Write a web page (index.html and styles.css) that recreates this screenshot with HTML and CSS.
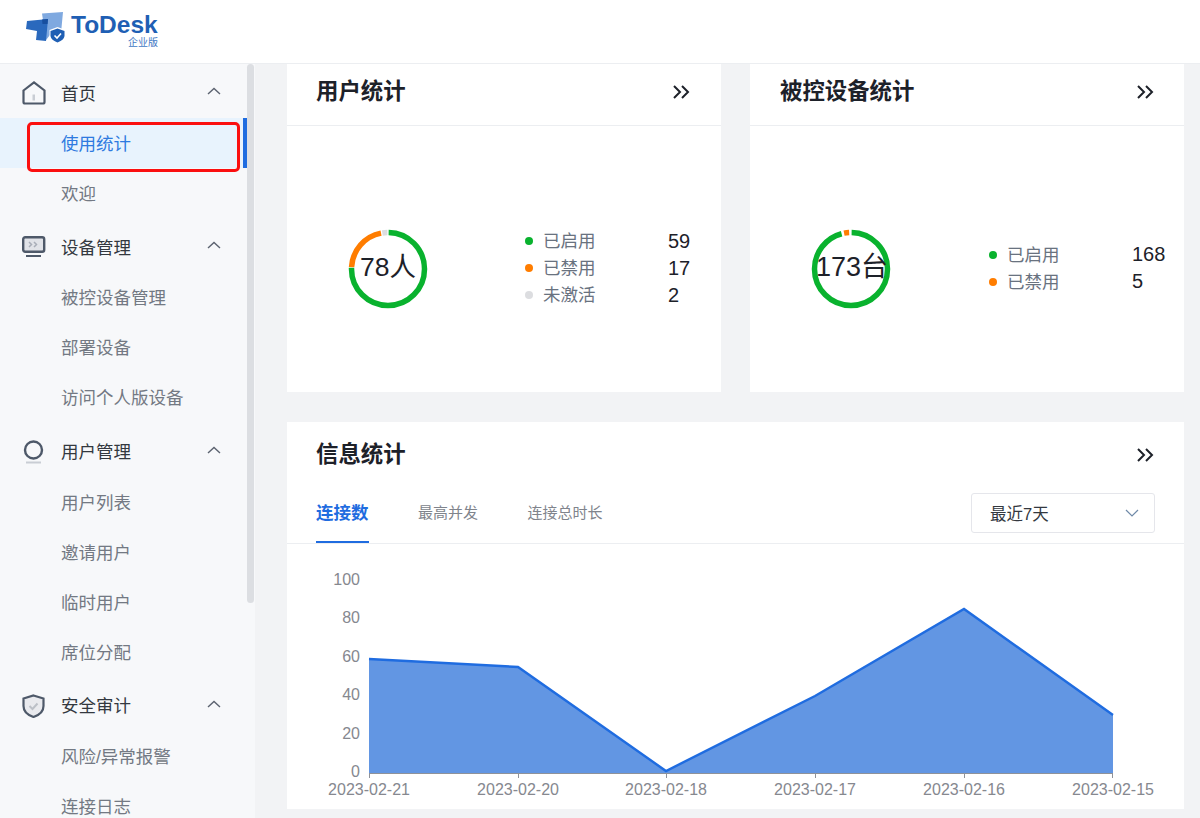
FILE: index.html
```html
<!DOCTYPE html>
<html lang="zh-CN">
<head>
    <meta charset="UTF-8">
    <meta name="viewport" content="width=device-width, initial-scale=1.0">
    <title>ToDesk 企业版</title>
    <link rel="stylesheet" href="styles.css">
</head>
<body>
    <header class="topbar">
        <svg class="logo-mark" width="42" height="32" viewBox="0 0 42 32">
            <path d="M17 1.5 L38 0 L36 21 L25 23 L21 28 Z" fill="#7fa9e0"/>
            <path d="M2 9 L23 7 L21 29 L11 28 L12 19 L1 17 Z" fill="#2a69bd"/>
            <path d="M17 7.5 L23 7 L22.5 12 L17.5 12 Z" fill="#174f9f"/>
            <path d="M32.5 15 L40.5 18 V23.5 C40.5 27 37.5 29.5 32.5 31.5 C27.5 29.5 24.5 27 24.5 23.5 V18 Z" fill="#fff"/>
            <path d="M32.5 16.5 L39.5 19 V23.5 C39.5 26.5 37 28.5 32.5 30.5 C28 28.5 25.5 26.5 25.5 23.5 V19 Z" fill="#1f5fb4"/>
            <path d="M29.5 23.5 L32 26 L36 21.5" fill="none" stroke="#fff" stroke-width="1.6"/>
        </svg>
        <div class="logo-text">
            <div class="logo-name">ToDesk</div>
            <div class="logo-sub">企业版</div>
        </div>
    </header>

    <div class="layout">
        <aside class="sidebar">
            <nav class="nav">
                <div class="group">
                    <div class="group-title">
                        <svg class="group-icon" width="24" height="24" viewBox="0 0 24 24">
                            <path d="M1.5 9.5 L12 1.5 L22.5 9.5 V21 A1.5 1.5 0 0 1 21 22.5 H3 A1.5 1.5 0 0 1 1.5 21 Z" fill="none" stroke="#4e5969" stroke-width="2.2"/>
                            <rect x="10.5" y="13.5" width="2.5" height="6" fill="#c9cdd4"/>
                        </svg>
                        <span>首页</span>
                        <svg class="caret" width="14" height="8" viewBox="0 0 14 8"><path d="M1 7 L7 1.5 L13 7" fill="none" stroke="#5c6370" stroke-width="1.4"/></svg>
                    </div>
                    <div class="item active">使用统计<span class="mark"></span></div>
                    <div class="item">欢迎</div>
                </div>
                <div class="group">
                    <div class="group-title">
                        <svg class="group-icon" width="24" height="22" viewBox="0 0 24 22">
                            <rect x="1.2" y="1.2" width="21" height="14.5" rx="2" fill="#e1e3e8" stroke="#4e5969" stroke-width="2.4"/>
                            <path d="M7 6 L9.5 8.5 L7 11 M12 6 L14.5 8.5 L12 11" fill="none" stroke="#a9aeb8" stroke-width="1.5"/>
                            <rect x="4" y="19" width="15" height="2" fill="#4e5969"/>
                        </svg>
                        <span>设备管理</span>
                        <svg class="caret" width="14" height="8" viewBox="0 0 14 8"><path d="M1 7 L7 1.5 L13 7" fill="none" stroke="#5c6370" stroke-width="1.4"/></svg>
                    </div>
                    <div class="item">被控设备管理</div>
                    <div class="item">部署设备</div>
                    <div class="item">访问个人版设备</div>
                </div>
                <div class="group">
                    <div class="group-title">
                        <svg class="group-icon" width="24" height="24" viewBox="0 0 24 24">
                            <circle cx="11.5" cy="10" r="8.5" fill="none" stroke="#4e5969" stroke-width="2.4"/>
                            <rect x="4" y="21.5" width="15" height="2" fill="#c9cdd4"/>
                        </svg>
                        <span>用户管理</span>
                        <svg class="caret" width="14" height="8" viewBox="0 0 14 8"><path d="M1 7 L7 1.5 L13 7" fill="none" stroke="#5c6370" stroke-width="1.4"/></svg>
                    </div>
                    <div class="item">用户列表</div>
                    <div class="item">邀请用户</div>
                    <div class="item">临时用户</div>
                    <div class="item">席位分配</div>
                </div>
                <div class="group">
                    <div class="group-title">
                        <svg class="group-icon" width="24" height="24" viewBox="0 0 24 24">
                            <path d="M11.5 1.5 L21.5 4.5 V12 C21.5 17.5 17.5 21 11.5 23 C5.5 21 1.5 17.5 1.5 12 V4.5 Z" fill="#e9eaee" stroke="#4e5969" stroke-width="2.2"/>
                            <path d="M7.5 12 L10.5 15 L15.5 9.5" fill="none" stroke="#bcc0c7" stroke-width="2"/>
                        </svg>
                        <span>安全审计</span>
                        <svg class="caret" width="14" height="8" viewBox="0 0 14 8"><path d="M1 7 L7 1.5 L13 7" fill="none" stroke="#5c6370" stroke-width="1.4"/></svg>
                    </div>
                    <div class="item">风险/异常报警</div>
                    <div class="item">连接日志</div>
                </div>
            </nav>
            <div class="scroll-track"><div class="scroll-thumb"></div></div>
        </aside>

        <main class="main">
            <div class="stats-row">
                <section class="card">
                    <div class="card-head">
                        <h2>用户统计</h2>
                        <svg class="more" width="18" height="14" viewBox="0 0 18 14"><path d="M2 1 L8 7 L2 13 M10 1 L16 7 L10 13" fill="none" stroke="#1d2129" stroke-width="2"/></svg>
                    </div>
                    <div class="stat-body">
                        <div class="donut">
                            <svg width="80" height="80" viewBox="0 0 80 80">
                                <g fill="none" stroke-width="5.5" transform="rotate(-90 40 40)">
                                    <circle cx="40" cy="40" r="36.5" pathLength="360" stroke="#09b22e" stroke-dasharray="271 89" stroke-dashoffset="-1"/>
                                    <circle cx="40" cy="40" r="36.5" pathLength="360" stroke="#ff7d00" stroke-dasharray="76 284" stroke-dashoffset="-273"/>
                                    <circle cx="40" cy="40" r="36.5" pathLength="360" stroke="#dcdde0" stroke-dasharray="8 352" stroke-dashoffset="-351"/>
                                </g>
                            </svg>
                            <span class="donut-label">78人</span>
                        </div>
                        <div class="legend">
                            <i class="dot green"></i><span class="legend-name">已启用</span><span class="legend-num">59</span>
                            <i class="dot orange"></i><span class="legend-name">已禁用</span><span class="legend-num">17</span>
                            <i class="dot grey"></i><span class="legend-name">未激活</span><span class="legend-num">2</span>
                        </div>
                    </div>
                </section>
                <section class="card">
                    <div class="card-head">
                        <h2>被控设备统计</h2>
                        <svg class="more" width="18" height="14" viewBox="0 0 18 14"><path d="M2 1 L8 7 L2 13 M10 1 L16 7 L10 13" fill="none" stroke="#1d2129" stroke-width="2"/></svg>
                    </div>
                    <div class="stat-body">
                        <div class="donut">
                            <svg width="80" height="80" viewBox="0 0 80 80">
                                <g fill="none" stroke-width="5.5" transform="rotate(-90 40 40)">
                                    <circle cx="40" cy="40" r="36.5" pathLength="360" stroke="#09b22e" stroke-dasharray="344 16" stroke-dashoffset="-1"/>
                                    <circle cx="40" cy="40" r="36.5" pathLength="360" stroke="#ff7d00" stroke-dasharray="8 352" stroke-dashoffset="-349"/>
                                </g>
                            </svg>
                            <span class="donut-label wide">173台</span>
                        </div>
                        <div class="legend">
                            <i class="dot green"></i><span class="legend-name">已启用</span><span class="legend-num">168</span>
                            <i class="dot orange"></i><span class="legend-name">已禁用</span><span class="legend-num">5</span>
                        </div>
                    </div>
                </section>
            </div>

            <section class="card chart-card">
                <div class="chart-head">
                    <h2>信息统计</h2>
                    <svg class="more" width="18" height="14" viewBox="0 0 18 14"><path d="M2 1 L8 7 L2 13 M10 1 L16 7 L10 13" fill="none" stroke="#1d2129" stroke-width="2"/></svg>
                </div>
                <div class="tabs">
                    <div class="tab current">连接数</div>
                    <div class="tab">最高并发</div>
                    <div class="tab">连接总时长</div>
                    <div class="select">
                        <span>最近7天</span>
                        <svg width="14" height="8" viewBox="0 0 14 8"><path d="M1 1 L7 7 L13 1" fill="none" stroke="#6f8aa8" stroke-width="1.2"/></svg>
                    </div>
                </div>
                <svg class="chart" width="897" height="265" viewBox="0 0 897 265">
                    <path d="M82 115 L231 123 L379 227 L528 152 L677 65 L826 171 V229 H82 Z" fill="#6296e3"/>
                    <path d="M82 115 L231 123 L379 227 L528 152 L677 65 L826 171" fill="none" stroke="#1f6ce0" stroke-width="2.4"/>
                    <path d="M82 229.5 H826 M82.5 229 V234 M231.5 229 V234 M379.5 229 V234 M528.5 229 V234 M677.5 229 V234 M825.5 229 V234" fill="none" stroke="#8f9299" stroke-width="1"/>
                    <g class="axis-y">
                        <text x="73" y="41">100</text>
                        <text x="73" y="79">80</text>
                        <text x="73" y="118">60</text>
                        <text x="73" y="156">40</text>
                        <text x="73" y="195">20</text>
                        <text x="73" y="233">0</text>
                    </g>
                    <g class="axis-x">
                        <text x="82" y="251">2023-02-21</text>
                        <text x="231" y="251">2023-02-20</text>
                        <text x="379" y="251">2023-02-18</text>
                        <text x="528" y="251">2023-02-17</text>
                        <text x="677" y="251">2023-02-16</text>
                        <text x="826" y="251">2023-02-15</text>
                    </g>
                </svg>
            </section>
        </main>
    </div>
</body>
</html>
```

FILE: styles.css
```css
* {
    box-sizing: border-box;
}
html, body {
    height: 100%;
    margin: 0;
    overflow: hidden;
}
body {
    display: flex;
    flex-direction: column;
    background: #f2f3f5;
    color: #1d2129;
    font-family: "Liberation Sans", "Noto Sans CJK SC", sans-serif;
}
.topbar {
    display: flex;
    align-items: flex-start;
    flex: none;
    height: 64px;
    padding: 12px 0 0 25px;
    background: #fff;
    border-bottom: 1px solid #eceef1;
    position: relative;
    z-index: 2;
}
.logo-text {
    width: 87px;
    margin-left: 4px;
}
.logo-name {
    font-size: 24.5px;
    line-height: 26px;
    font-weight: 700;
    color: #1f5fb4;
}
.logo-sub {
    font-size: 10px;
    line-height: 10px;
    text-align: right;
    color: #3f78c4;
}
.layout {
    display: flex;
    flex: 1;
    min-height: 0;
}
.sidebar {
    display: flex;
    flex: none;
    width: 255px;
    background: #f7f8fa;
    overflow: hidden;
}
.nav {
    width: 247px;
    flex: none;
    padding-top: 4px;
}
.group {
    margin-bottom: 4.3px;
}
.group-title {
    display: flex;
    align-items: center;
    height: 50px;
    padding: 0 26px 0 22px;
    font-size: 17.5px;
    color: #33383f;
}
.group-icon {
    flex: none;
    margin-right: 15px;
}
.group-title span {
    flex: 1;
    margin-bottom: 2px;
}
.caret {
    flex: none;
    margin-bottom: 4px;
}
.item {
    position: relative;
    height: 50px;
    line-height: 52px;
    padding-left: 61px;
    font-size: 17.5px;
    color: #737983;
}
.item.active {
    background: #e8f3fd;
    color: #2e7ae0;
}
.item.active .mark {
    position: absolute;
    left: 27px;
    top: 4px;
    width: 213px;
    height: 50px;
    border: 3.5px solid #fb0f0f;
    border-radius: 5px;
}
.item.active::after {
    content: "";
    position: absolute;
    right: 0;
    top: 0;
    width: 4px;
    height: 50px;
    background: #1f6ce0;
}
.scroll-track {
    flex: none;
    width: 8px;
}
.scroll-thumb {
    width: 7px;
    height: 539px;
    background: #dcdee2;
    border-radius: 4px;
}
.main {
    flex: 1;
    min-width: 0;
    margin-top: -5px;
    padding: 0 16px 0 32px;
    overflow: hidden;
}
.stats-row {
    display: flex;
    gap: 29px;
    margin-bottom: 30px;
}
.card {
    background: #fff;
}
.stats-row .card {
    width: 434px;
    height: 333px;
}
.card-head {
    display: flex;
    align-items: center;
    justify-content: space-between;
    height: 67px;
    padding: 0 31px 0 29px;
    border-bottom: 1px solid #eceef1;
}
.card + .card .card-head {
    padding: 0 30px;
}
.card h2 {
    margin: 0;
    font-size: 22.4px;
    line-height: 30px;
    font-weight: 700;
    color: #1d2129;
}
.stat-body {
    display: flex;
    align-items: center;
    height: 266px;
    padding: 20px 0 0 61px;
}
.donut {
    position: relative;
    flex: none;
    width: 80px;
    height: 80px;
    margin-right: 97px;
}
.donut svg {
    display: block;
}
.donut-label {
    position: absolute;
    left: -10px;
    right: -10px;
    top: 0;
    line-height: 76px;
    text-align: center;
    font-size: 26.5px;
    color: #1d2129;
}
.donut-label.wide {
    font-size: 27px;
    padding-left: 2px;
}
.legend {
    display: grid;
    grid-template-columns: 8px 124px auto;
    column-gap: 11px;
    align-items: center;
    grid-auto-rows: 27px;
    margin-top: -2px;
}
.card + .card .legend {
    margin-left: 1px;
}
.legend-name {
    font-size: 17.5px;
    line-height: 23px;
    margin: 1px 0 0 -1px;
    color: #69727f;
}
.legend-num {
    font-size: 20px;
    margin-left: -11px;
    color: #1d2129;
}
.dot {
    width: 8px;
    height: 8px;
    border-radius: 50%;
}
.dot.green {
    background: #09b22e;
}
.dot.orange {
    background: #ff7d00;
}
.dot.grey {
    background: #dcdde0;
}
.chart-card {
    height: 387px;
}
.chart-head {
    display: flex;
    align-items: center;
    justify-content: space-between;
    height: 66px;
    padding: 0 30px 0 29px;
}
.tabs {
    display: flex;
    align-items: flex-start;
    height: 56px;
    padding: 5px 29px 0 29px;
    border-bottom: 1px solid #eceef1;
}
.tab {
    height: 50px;
    line-height: 40px;
    font-size: 15px;
    color: #80848c;
    margin-right: 49.5px;
}
.tab.current {
    font-size: 17.5px;
    font-weight: 700;
    color: #1f6ce0;
    border-bottom: 2px solid #1f6ce0;
}
.select {
    display: flex;
    align-items: center;
    justify-content: space-between;
    width: 184px;
    height: 40px;
    margin-left: auto;
    padding: 0 15px 0 18px;
    border: 1px solid #e5e6eb;
    border-radius: 3px;
    font-size: 16.5px;
    line-height: 36px;
    color: #33383f;
}
.select span {
    margin-top: 2px;
}
.chart {
    display: block;
}
.chart text {
    font-size: 16px;
    fill: #86888f;
}
.axis-y text {
    text-anchor: end;
}
.axis-x text {
    text-anchor: middle;
}
```
